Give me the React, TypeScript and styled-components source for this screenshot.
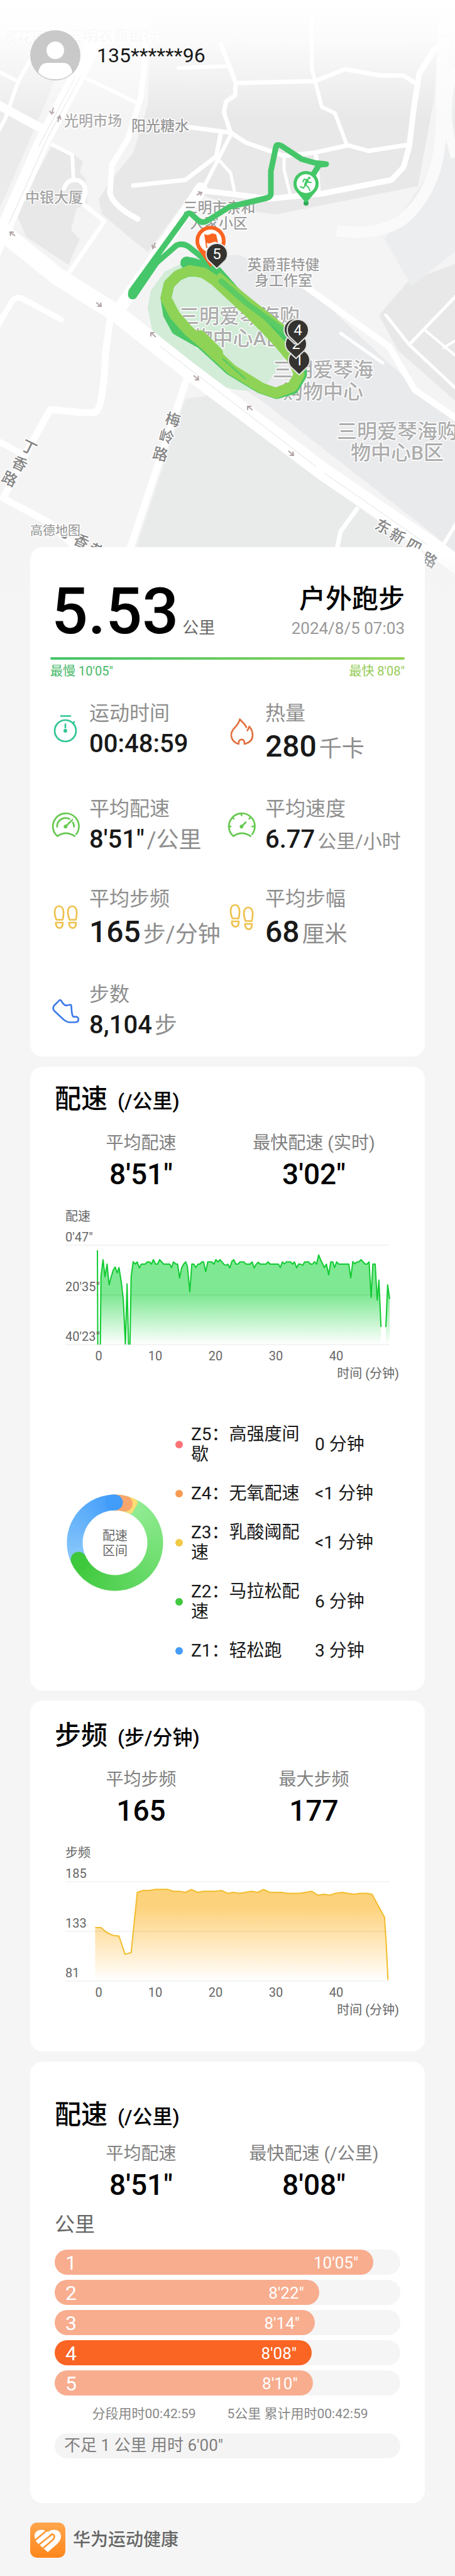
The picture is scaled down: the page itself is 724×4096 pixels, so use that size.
import React, { useId } from 'react';
import styled, { createGlobalStyle } from 'styled-components';

const GlobalStyle = createGlobalStyle`
  * { box-sizing: border-box; }
  body {
    margin: 0;
    background: #f5f5f5;
    color: #191919;
    font-family: Roboto, "Noto Sans CJK SC", sans-serif;
  }
  h1, h2, p, dl, dt, dd, ul, ol { margin: 0; padding: 0; }
  ul, ol { list-style: none; }
`;

const Page = styled.main`
  min-width: 600px;
`;

/* ---------- Map hero ---------- */

const Hero = styled.header`
  position: relative;
`;

const MapSvg = styled.svg`
  display: block;
  width: 100%;
  height: auto;
`;

const User = styled.div`
  position: absolute;
  top: 48px;
  left: 48px;
  display: flex;
  align-items: center;
  gap: 26px;
`;

const UserName = styled.span`
  font-size: 32px;
  line-height: 40px;
`;

const MapText = styled.text<{ $fill?: string; $weight?: number }>`
  fill: ${(p) => p.$fill ?? '#a2a2a2'};
  font-weight: ${(p) => p.$weight ?? 500};
  stroke: #ffffff;
  stroke-width: 3px;
  stroke-linejoin: round;
  paint-order: stroke;
  text-anchor: middle;
  dominant-baseline: central;
`;

const PinText = styled.text`
  fill: #ffffff;
  font-size: 24px;
  text-anchor: middle;
  dominant-baseline: central;
`;

const places = [
  { text: '景花园', x: 40, y: 60, size: 24, fill: '#d2d2d2' },
  { text: '三明农商银行', x: 180, y: 57, size: 24, fill: '#d2d2d2' },
  { text: '光明市场', x: 148, y: 192, size: 23, fill: '#a9a9a9' },
  { text: '阳光糖水', x: 255, y: 200, size: 23, fill: '#989898' },
  { text: '中银大厦', x: 86, y: 314, size: 23, fill: '#a2a2a2' },
  { text: '三明市亲和', x: 349, y: 330, size: 23, fill: '#9c9c9c' },
  { text: '人家小区', x: 348, y: 355, size: 23, fill: '#9c9c9c' },
  { text: '英爵菲特健', x: 451, y: 421, size: 23, fill: '#9c9c9c' },
  { text: '身工作室', x: 451, y: 446, size: 23, fill: '#9c9c9c' },
  { text: '三明爱琴海购', x: 381, y: 503, size: 32, fill: '#adadad' },
  { text: '物中心A区', x: 381, y: 538, size: 32, fill: '#adadad' },
  { text: '三明爱琴海', x: 514, y: 588, size: 32, fill: '#adadad' },
  { text: '购物中心', x: 514, y: 623, size: 32, fill: '#adadad' },
  { text: '三明爱琴海购', x: 632, y: 686, size: 32, fill: '#adadad' },
  { text: '物中心B区', x: 632, y: 720, size: 32, fill: '#adadad' },
];

const roadGlyphs = [
  { text: '梅', x: 275, y: 668, turn: 15 },
  { text: '岭', x: 265, y: 695, turn: 15 },
  { text: '路', x: 255, y: 723, turn: 14 },
  { text: '丁', x: 46, y: 712, turn: 26 },
  { text: '香', x: 31, y: 738, turn: 26 },
  { text: '路', x: 15, y: 762, turn: 26 },
  { text: '丁', x: 107, y: 848, turn: 26 },
  { text: '香', x: 129, y: 861, turn: 26 },
  { text: '巷', x: 153, y: 876, turn: 26 },
  { text: '东', x: 609, y: 838, turn: 28 },
  { text: '新', x: 632, y: 853, turn: 28 },
  { text: '四', x: 658, y: 869, turn: 28 },
  { text: '路', x: 683, y: 891, turn: 28 },
];

const roads: { w: number; d: string }[] = [
  { w: 24, d: 'M150 60 L139 92 L69 222 L9 358 L-10 400' },
  { w: 28, d: 'M-10 358 L92 440 L185 498 L295 585 L517 752 L693 872 L740 908' },
  { w: 20, d: 'M320 300 L297 335 L240 420 L185 498' },
  { w: 11, d: 'M303 585 L208 869 L195 915' },
  { w: 11, d: 'M177 495 L168 560 Q164 656 150 656 L130 656 L80 651 L46 712 L5 792 L78 831 L120 870' },
  { w: 9, d: 'M-5 520 L20 478 Q28 470 38 476 L97 508' },
  { w: 10, d: 'M-6 700 L36 722' },
  { w: 14, d: 'M-4 166 L69 206' },
  { w: 6, d: 'M48 95 L28 132 L9 187 L-2 208' },
  { w: 6, d: 'M-2 114 L30 130' },
  { w: 6, d: 'M134 123 L217 163' },
  { w: 9, d: 'M232 60 L228 120 L224 155 L203 222 L178 262 L175 307 Q180 328 219 348' },
  { w: 6, d: 'M83 230 L115 246 L117 286' },
  { w: 7, d: 'M102 300 Q106 287 118 286 Q134 286 136 304 L132 324 L166 352 L111 432' },
  { w: 6, d: 'M284 108 L365 105' },
  { w: 7, d: 'M351 70 L365 105 L375 132 L374 152 L360 161 L356 178 L367 211 L392 227 L452 248 L499 243 L554 231 L586 240 L651 230' },
  { w: 7, d: 'M375 132 L501 129 L549 110 L605 120 L642 120 L665 135' },
  { w: 6, d: 'M496 26 L496 108 L503 135 L512 170 L533 180 L552 231' },
  { w: 9, d: 'M693 76 L667 117 L658 176 L651 234 L642 266 L623 286 L512 308 L429 316 L323 303' },
  { w: 7, d: 'M300 202 L367 211' },
  { w: 7, d: 'M351 214 L344 249 L295 286 L212 295' },
  { w: 6, d: 'M369 211 L323 300' },
  { w: 5, d: 'M349 255 L367 275 L374 309' },
  { w: 5, d: 'M452 246 L452 270 L462 310' },
  { w: 7, d: 'M503 249 L507 306' },
  { w: 10, d: 'M478 450 L619 551 L660 620 L730 668' },
  { w: 5, d: 'M542 530 L609 577' },
  { w: 5, d: 'M614 501 L651 548 L730 622' },
  { w: 5, d: 'M651 548 L730 466' },
  { w: 4, d: 'M674 523 L730 570' },
  { w: 4, d: 'M706 553 L730 538' },
  { w: 7, d: 'M568 809 L542 845 L530 900' },
  { w: 6, d: 'M697 880 L730 826' },
];

type PinProps = { x: number; y: number; r: number; tail: number; fill: string; stroke?: string };

const Pin = ({ x, y, r, tail, fill, stroke }: PinProps) => (
  <path
    d={`M${x} ${y + tail} L${x - r * 0.82} ${y + r * 0.57} A${r} ${r} 0 1 1 ${x + r * 0.82} ${y + r * 0.57} Z`}
    fill={fill}
    stroke={stroke}
    strokeWidth={stroke ? 2 : 0}
    strokeLinejoin="round"
  />
);

const kmPins = [
  { n: '1', x: 476, y: 573 },
  { n: '2', x: 471, y: 547 },
  { n: '', x: 469, y: 524 },
  { n: '4', x: 474, y: 525 },
  { n: '5', x: 345, y: 404 },
];

const RouteMap = () => (
  <MapSvg viewBox="0 0 724 950" role="img" aria-label="跑步路线地图">
    <defs>
      <linearGradient id="fadeTop" x1="0" y1="0" x2="0" y2="1">
        <stop offset="0" stopColor="#ffffff" />
        <stop offset="0.32" stopColor="#ffffff" stopOpacity="0.85" />
        <stop offset="1" stopColor="#ffffff" stopOpacity="0" />
      </linearGradient>
      <linearGradient id="fadeBottom" x1="0" y1="0" x2="0" y2="1">
        <stop offset="0" stopColor="#f5f5f5" stopOpacity="0" />
        <stop offset="1" stopColor="#f5f5f5" />
      </linearGradient>
    </defs>
    <rect width="724" height="950" fill="#f5f4f4" />
    <g fill="#e8e8e8">
      <path d="M0 60 L110 60 L78 150 L40 240 L0 330 Z" fill="#ebebeb" />
      <path d="M240 29 L697 29 L692 150 L665 296 L439 341 L402 336 L319 310 L295 320 L235 401 L203 375 L162 340 L157 316 L178 285 L212 243 L235 167 Z" />
      <path d="M83 231 L115 243 L132 257 L127 275 L136 284 L139 325 L122 331 L113 366 L127 380 L109 421 L42 377 L28 345 L35 319 Z" />
      <path d="M651 446 L603 501 L633 557 L724 637 L724 420 Z" />
      <path d="M724 120 L700 250 L612 380 L655 455 L724 400 Z" fill="#ebedee" />
      <path d="M380 405 L480 447 L614 573 L724 672 L724 880 L690 850 L420 640 L300 560 L240 480 L300 410 Z" fill="#e9eaec" />
      <path d="M295 634 L332 629 L605 831 L640 870 L640 950 L190 950 Z" fill="#e9ebeb" />
      <path d="M297 415 L262 432 L240 462 L235 490 L242 525 L295 573 L350 612 Q380 626 420 618 L452 570 L443 518 L360 452 Z" fill="#d2ecd7" />
    </g>
    <path d="M706 60 L702 200 Q700 300 640 350 Q600 376 536 367" fill="none" stroke="#fafafa" strokeWidth="18" />
    <path d="M724 110 Q700 170 724 250" fill="none" stroke="#fafafa" strokeWidth="14" />
    <g fill="none" stroke="#ffffff" strokeLinejoin="round" strokeLinecap="round">
      {roads.map((road) => (
        <path key={road.d} d={road.d} strokeWidth={road.w} />
      ))}
    </g>
    <g fill="none" stroke="#dfe3e2" strokeWidth="1">
      <path d="M128 122 L76 218 L14 356" />
      <path d="M120 122 L62 232" />
      <path d="M254 550 L503 742" />
      <path d="M516 752 L680 866" />
    </g>
    <g fill="none" stroke="#b3a5a5" strokeWidth="2">
      <path d="M85 171 L82 181 M79 176 L82 181 L86 178" />
      <path d="M92 194 L95 184 M91 188 L95 184 L97 190" />
      <path d="M16 369 L24 375 M17 375 L16 369 L22 369" />
      <path d="M247 386 L243 395 M242 389 L243 395 L248 392" />
      <path d="M313 310 L321 306 M315 305 L321 306 L319 311" />
      <path d="M153 481 L161 487 M160 481 L161 487 L155 487" />
      <path d="M248 536 L240 529 M240 535 L240 529 L246 529" />
      <path d="M308 597 L316 604 M315 598 L316 604 L310 604" />
      <path d="M402 652 L394 646 M394 652 L394 646 L400 646" />
      <path d="M459 717 L467 724 M466 718 L467 724 L461 724" />
    </g>
    {places.map((place) => (
      <MapText key={`${place.text}${place.y}`} x={place.x} y={place.y} fontSize={place.size} $fill={place.fill}>
        {place.text}
      </MapText>
    ))}
    {roadGlyphs.map((glyph) => (
      <MapText
        key={`${glyph.x}-${glyph.y}`}
        fontSize="24"
        $fill="#858585"
        transform={`translate(${glyph.x} ${glyph.y}) rotate(${glyph.turn})`}
      >
        {glyph.text}
      </MapText>
    ))}
    <MapText x="88" y="844" fontSize="20" $fill="#929292" $weight={400}>高德地图</MapText>

    <g fill="none" stroke="#46c66a" strokeWidth="9" strokeLinejoin="round">
      <path d="M496 281 L508 262 L519 261 L501 259 L480 253 L448 232 Q440 228 439 234 L431 272 L431 308 Q431 313 424 315 L365 329 L330 351 Q322 356 315 350 L304 340 Q299 337 296 343 L209 463 Q206 473 213 471 L219 462 L249 418 L281 390 Q290 386 300 392 L320 408 L345 432" />
      <path d="M297 418 Q320 421 342 436" strokeWidth="20" strokeLinecap="round" />
    </g>
    <g fill="none" strokeLinejoin="round" strokeLinecap="round">
      <path
        d="M345 432 L368 458 L395 490 L428 512 L462 540 L478 566 L480 596 L467 618 L440 626 L414 617 L366 588 L320 546 L281 524 L268 500 L264 474 L269 452 L283 438 L300 431 Z"
        stroke="#4bc766"
        strokeWidth="17"
      />
      <path
        d="M342 446 L368 470 L396 496 L424 524 L448 550 L468 574 L476 596 L465 615 L439 625 L416 617 L369 588 L332 553 L300 526 L278 501 L264 474 L269 452 L283 438 L302 430 L324 434 Z"
        stroke="#8fd356"
        strokeWidth="17"
      />
      <path d="M350 438 L385 468 L420 496 L450 520" stroke="#8fd356" strokeWidth="8" />
      <path d="M352 447 L392 482 L430 510 L462 534" stroke="#5ccb63" strokeWidth="9" />
      <path d="M318 536 L344 562" stroke="#8fd356" strokeWidth="22" />
      <path d="M355 571 L390 602" stroke="#5ccb63" strokeWidth="3" />
    </g>

    <circle cx="487" cy="323" r="4" fill="#2fa955" />
    <Pin x={487} y={292} r={20} tail={31} fill="#43c765" />
    <circle cx="487" cy="292" r="15" fill="#ffffff" />
    <circle cx="492" cy="283" r="2" fill="#43c765" />
    <g fill="none" stroke="#43c765" strokeLinecap="round" strokeLinejoin="round">
      <path d="M482 289 L484 285 L489 286 L491 290 L495 290" strokeWidth="2" />
      <path d="M489 286 L486 293" strokeWidth="4" />
      <path d="M486 294 L491 298 L493 303 M486 294 L483 299 L478 297" strokeWidth="2" />
    </g>

    <Pin x={335} y={383} r={24} tail={42} fill="#fb6420" />
    <circle cx="335" cy="383" r="18" fill="#ffffff" />
    <path d="M325 372 Q330 375 335 372 Q340 370 344 373 L347 386 Q342 383 337 386 Q332 388 329 386 L330 394 L328 394 Z" fill="#fb6420" />

    {kmPins.map((pin) => (
      <g key={`${pin.x}-${pin.y}`}>
        <Pin x={pin.x} y={pin.y} r={17} tail={23} fill="#34332f" stroke="#e3e3e3" />
        <PinText x={pin.x} y={pin.y}>{pin.n}</PinText>
      </g>
    ))}

    <rect width="724" height="190" fill="url(#fadeTop)" />
    <rect y="880" width="724" height="70" fill="url(#fadeBottom)" />
  </MapSvg>
);

const Avatar = () => (
  <svg width="80" height="80" viewBox="0 0 80 80" aria-hidden="true">
    <circle cx="40" cy="40" r="40" fill="#c9c9c9" />
    <circle cx="40" cy="32" r="14" fill="#ffffff" />
    <path d="M13 67 C15 56 20 52 28 52 H52 C60 52 65 56 67 67 C60 75 51 78 40 78 C29 78 20 75 13 67 Z" fill="#ffffff" />
  </svg>
);

/* ---------- Cards ---------- */

const Cards = styled.div`
  position: relative;
  margin: -80px 48px 0;
  display: flex;
  flex-direction: column;
  gap: 16px;
`;

const Card = styled.section<{ $pad: string }>`
  padding: ${(p) => p.$pad};
  border-radius: 20px;
  background: #ffffff;
`;

const Summary = styled.div`
  display: flex;
  justify-content: space-between;
  align-items: center;
`;

const Distance = styled.p`
  display: flex;
  align-items: baseline;
  gap: 6px;
  padding-left: 2px;
  color: #666666;
  font-size: 26px;
  line-height: 30px;
`;

const DistanceNumber = styled.span`
  color: #000000;
  font-size: 102px;
  font-weight: 500;
  line-height: 120px;
`;

const Activity = styled.div`
  text-align: right;
`;

const ActivityName = styled.h1`
  color: #000000;
  font-size: 42px;
  font-weight: 500;
  line-height: 50px;
`;

const ActivityDate = styled.p`
  margin-top: 3px;
  color: #999999;
  font-size: 26px;
  line-height: 36px;
`;

const PaceLine = styled.div`
  height: 4px;
  margin-top: 13px;
  border-radius: 2px;
  background: linear-gradient(90deg, #45c46c, #92d259);
`;

const PaceRange = styled.div`
  display: flex;
  justify-content: space-between;
  margin-top: 4px;
  color: #45b866;
  font-size: 20px;
  line-height: 28px;

  span:last-child { color: #96cc58; }
`;

const Metrics = styled.dl`
  display: grid;
  grid-template-columns: 70fr 71fr;
  align-items: start;
  row-gap: 50px;
  margin-top: 32px;
`;

const Metric = styled.div`
  display: grid;
  grid-template-columns: 48px 1fr;
  column-gap: 14px;
  align-items: center;
`;

const MetricLabel = styled.dt`
  color: #8e8e8e;
  font-size: 32px;
  line-height: 42px;
`;

const MetricValue = styled.dd<{ $large?: boolean; $smallUnit?: boolean }>`
  display: flex;
  align-items: baseline;
  gap: 4px;
  margin-top: 4px;
  white-space: nowrap;
  height: ${(p) => (p.$large ? 56 : 47)}px;
  line-height: ${(p) => (p.$large ? 56 : 47)}px;

  b {
    font-size: ${(p) => (p.$large ? 48 : 40)}px;
    font-weight: 500;
  }
  span {
    color: #8e8e8e;
    font-size: ${(p) => (p.$smallUnit ? 30 : 36)}px;
  }
`;

const IconBox = styled.svg`
  display: block;
  width: 48px;
  height: 48px;
  fill: none;
  stroke: currentColor;
  stroke-width: 2.7px;
  stroke-linecap: round;
  stroke-linejoin: round;
`;

const TimerIcon = () => (
  <IconBox viewBox="0 0 48 48" color="#30c596">
    <circle cx="24" cy="26" r="17" />
    <path d="M17 2.5 H32 M24 15.5 V21 M36.5 13.5 L38 12" />
    <circle cx="24" cy="26" r="1.6" fill="currentColor" />
  </IconBox>
);

const FlameIcon = () => (
  <IconBox viewBox="0 0 48 48" color="#e1713f">
    <path d="M32 16.5 C30.5 11.5 25 8 21.6 3.6 C20 9.5 18 12.5 14 16.5 C9.5 21 7.5 25 8 30 C9 38 14 41.5 19.7 43 C19.4 38 21.5 35.8 24.4 35.8 C27.5 35.8 29.4 38 29 43 C37 41 42 36 42 29 C42 23 39.5 18.5 36.6 15.2 C36 18 35 19.5 33.5 21.5" />
  </IconBox>
);

const PaceIcon = () => (
  <IconBox viewBox="0 0 48 48" color="#66c94f">
    <path d="M39 41.6 Q24.3 32 11.3 41.6 A20.7 20.7 0 1 1 41.4 38.4" />
    <path d="M10.9 26.6 A13.4 13.4 0 0 1 30.5 14.2 M36 19.8 A13.4 13.4 0 0 1 37.8 26.6" />
    <path d="M24.3 26.2 L35 15.8" />
    <circle cx="24.3" cy="26.2" r="1.6" fill="currentColor" />
  </IconBox>
);

const SpeedIcon = () => (
  <IconBox viewBox="0 0 48 48" color="#66c94f">
    <path d="M39 41.6 Q24.3 32 11.3 41.6 A20.7 20.7 0 1 1 41.4 38.4" />
    <path d="M24.3 6 V8.5 M4 26.2 H7 M41.5 26.2 H44.5 M10.5 12.4 L12 13.9 M38 12.4 L36.5 13.9" />
    <path d="M24.3 26.2 L31 19.5" />
    <circle cx="24.3" cy="26.2" r="1.6" fill="currentColor" />
  </IconBox>
);

const footShape = 'M9.8 27.5 C5 16 6.5 6 14 6 C21.5 6 22.5 16 19.6 27.5 Z M8.8 32 H20 C20 38 18.5 40.6 15 40.6 C11 40.6 8.8 38 8.8 32 Z';

const StepsIcon = ({ stagger = 0 }: { stagger?: number }) => (
  <IconBox viewBox="0 0 48 48" color="#eec14c">
    <path d={footShape} transform={`translate(0 ${-stagger})`} />
    <path d={footShape} transform={`translate(21 ${stagger})`} />
  </IconBox>
);

const ShoeIcon = () => (
  <IconBox viewBox="0 0 48 48" color="#3f7be8">
    <path d="M14.5 7.6 C18.5 4.8 18.2 15.5 25.9 15.8 L30.5 14.8 C33.5 14.2 33.6 16 33.6 18 C34 27 35 34 37.5 33.8 C43 33 44.8 35 44.8 38 C44.8 41 42.5 42.5 39 42.5 H31 C27 42.5 24 40.5 21 38 L6.5 24.5 C4 22 4 19.5 6 16 Z" />
  </IconBox>
);

const metrics = [
  { label: '运动时间', value: '00:48:59', unit: '', icon: <TimerIcon /> },
  { label: '热量', value: '280', unit: '千卡', large: true, icon: <FlameIcon /> },
  { label: '平均配速', value: '8\'51"', unit: '/公里', icon: <PaceIcon /> },
  { label: '平均速度', value: '6.77', unit: '公里/小时', smallUnit: true, icon: <SpeedIcon /> },
  { label: '平均步频', value: '165', unit: '步/分钟', large: true, icon: <StepsIcon /> },
  { label: '平均步幅', value: '68', unit: '厘米', large: true, icon: <StepsIcon stagger={2} /> },
  { label: '步数', value: '8,104', unit: '步', icon: <ShoeIcon /> },
];

/* ---------- Section heading and stats ---------- */

const Title = styled.h2`
  display: flex;
  align-items: baseline;
  gap: 16px;
  color: #000000;
  font-size: 42px;
  font-weight: 500;
  line-height: 56px;

  small {
    font-size: 32px;
    line-height: 40px;
  }
`;

const Stats = styled.dl<{ $tight?: boolean }>`
  display: grid;
  grid-template-columns: 1fr 1fr;
  margin-top: ${(p) => (p.$tight ? 16 : 24)}px;
  text-align: center;

  dt {
    color: #808080;
    font-size: 28px;
    line-height: 36px;
  }
  dd {
    margin-top: 4px;
    color: #000000;
    font-size: 46px;
    font-weight: 500;
    line-height: 54px;
  }
`;

type StatsRowProps = { tight?: boolean; items: [string, string][] };

const StatsRow = ({ tight, items }: StatsRowProps) => (
  <Stats $tight={tight}>
    {items.map(([label, value]) => (
      <div key={label}>
        <dt>{label}</dt>
        <dd>{value}</dd>
      </div>
    ))}
  </Stats>
);

/* ---------- Area charts ---------- */

const ChartSvg = styled.svg`
  display: block;
  width: 100%;
  height: auto;
  margin-top: 26px;

  text {
    fill: #666666;
    font-size: 20px;
    dominant-baseline: central;
  }
`;

type ChartProps = {
  name: string;
  yLabels: string[];
  xLabels: { text: string; x: number }[];
  runs: string[];
  line: string;
  fill: string;
  solidUntil: number;
};

const AreaChart = ({ name, yLabels, xLabels, runs, line, fill, solidUntil }: ChartProps) => {
  const gradient = useId();
  return (
    <ChartSvg viewBox="0 0 550 278" role="img" aria-label={`${name}图表`}>
      <defs>
        <linearGradient id={gradient} gradientUnits="userSpaceOnUse" x1="0" y1="60" x2="0" y2="218">
          <stop offset={solidUntil} stopColor={fill} />
          <stop offset="1" stopColor={fill} stopOpacity="0" />
        </linearGradient>
      </defs>
      {runs.map((points) => {
        const pairs = points.split(' ');
        const start = pairs[0].split(',')[0];
        const end = pairs[pairs.length - 1].split(',')[0];
        return (
          <g key={points}>
            <polygon points={`${start},218 ${points} ${end},218`} fill={`url(#${gradient})`} />
            <polyline points={points} fill="none" stroke={line} strokeWidth="2" strokeLinejoin="round" />
          </g>
        );
      })}
      {[60, 139, 218].map((y) => (
        <path key={y} d={`M17 ${y} H533`} stroke="#000000" strokeOpacity="0.09" strokeWidth="1" />
      ))}
      <text x="17" y="14">{name}</text>
      {yLabels.map((label, i) => (
        <text key={label} x="17" y={47 + i * 79}>{label}</text>
      ))}
      {xLabels.map((label) => (
        <text key={label.text} x={label.x} y="236" textAnchor="middle">{label.text}</text>
      ))}
      <text x="548" y="264" textAnchor="end">时间 (分钟)</text>
    </ChartSvg>
  );
};

const minutes = [
  { text: '0', x: 70 },
  { text: '10', x: 160 },
  { text: '20', x: 256 },
  { text: '30', x: 352 },
  { text: '40', x: 448 },
];

const paceRuns = [
  '68,68 68.6,218',
  '72.7,218 73.7,109 77,83 80,110 83.4,90 86.6,123 90,110 93,100 96.3,94.5 99.5,104 102.3,95.5 106,118.6 109.2,146 112.5,217 115.2,121.6 117.5,218',
  '119.8,218 121.7,110 125,86 128,90 131.4,86.5 134.6,96 138,90 144,90 147.5,86.5 151,86.5 154,90 157,83 160.5,90 163.7,90 167,83 173.4,90 183,90 186,95.5 189,86.5 193,90 195.6,90 198.8,112 202,96 205.3,90 208.5,86.5 211.3,94 215,134 218.2,90 221.4,90 224.6,95.5 228,90 231,90 234.3,86.5 237,86.5 240.3,102 243.6,86.5 250,86.5 253.3,90 256.5,83 259.7,86.5 263,83 269,90 272.2,92 275.4,90 278.7,96 282,85.6 285,83 288.4,90 291.6,90 294.8,86.5 301,86.5 304.5,90 311,90 314.2,86.5 317.5,96 320.7,90 324,87 327,90 336.4,90 339.6,86.5 342.8,90 356,90 359,95.5 362.2,86.5 365.5,89.6 368.7,86.5 375.2,86.5 378.4,90 381.6,86.5 385,96 388,90 391.3,90 394.6,92 397.8,86.5 404,86.5 407,90 410.3,90 413.5,86 416.7,90 420,75.5 423.2,83 429.2,95.5 432.4,90 436,107 439.3,86.5 442.6,86.5 445.3,95.5 448.6,86.5 452,90 468,90 471.2,112 474.4,86 477.7,89.6 481,86.5 484,86.5 487.4,83 494,90 497,90 500.3,86.5 503.5,143 506.3,90 510,90 513.2,147 516,115.5 519.2,190',
  '527,190 529.8,123 533,145.5',
];

const cadenceRuns = [
  '64.4,133 73.7,133 83,141 93,145.4 102.3,146.6 112,175.4 121.7,172.7 131.4,77 140.6,74 150.3,74 160,72.3 179.4,72.3 188.6,75.3 198.3,75.3 208,77 217.7,72.3 227.4,77 236.7,75.3 256,75.3 265.3,74 275,78.4 284.7,77 294.4,78.4 313.3,75.3 323,77 332.2,72.3 342.4,77 361,77 370,78.4 390.4,78.4 409.3,75.3 419,81.5 428.7,80 438,81.5 447.2,78.4 457,77 476.3,80 486,78.4 497,78.4 505,80 524.8,116.5 527.5,157 530.3,216',
];

/* ---------- Pace zones ---------- */

const Zones = styled.div`
  display: grid;
  grid-template-columns: 154px 1fr;
  column-gap: 19px;
  align-items: center;
  margin-top: 67px;
  padding-left: 19px;
`;

const DonutSvg = styled.svg`
  display: block;
  width: 100%;

  text {
    fill: #666666;
    font-size: 20px;
    text-anchor: middle;
    dominant-baseline: central;
  }
`;

const ZoneList = styled.ul`
  display: grid;
  row-gap: 30px;
`;

const Zone = styled.li`
  display: grid;
  grid-template-columns: 12px 184px 1fr;
  column-gap: 13px;
  align-items: center;
  font-size: 28px;
  line-height: 32px;
`;

const Dot = styled.i<{ $color: string }>`
  width: 12px;
  height: 12px;
  border-radius: 50%;
  background: ${(p) => p.$color};
`;

const zones = [
  { name: 'Z5：高强度间歇', time: '0 分钟', color: '#fb7275' },
  { name: 'Z4：无氧配速', time: '<1 分钟', color: '#f79a52' },
  { name: 'Z3：乳酸阈配速', time: '<1 分钟', color: '#f1c944' },
  { name: 'Z2：马拉松配速', time: '6 分钟', color: '#41c83f' },
  { name: 'Z1：轻松跑', time: '3 分钟', color: '#439cfa' },
];

const RING = 64;

const onRing = (deg: number) => {
  const a = (deg * Math.PI) / 180;
  return `${(77 + RING * Math.sin(a)).toFixed(2)} ${(77 - RING * Math.cos(a)).toFixed(2)}`;
};

const arc = (from: number, to: number) =>
  `M${onRing(from)} A${RING} ${RING} 0 ${to - from > 180 ? 1 : 0} 1 ${onRing(to)}`;

type SweepProps = { from: number; to: number; start: number[]; end: number[] };

/* An arc whose colour runs from start to end, drawn as short overlapping pieces. */
const Sweep = ({ from, to, start, end }: SweepProps) => {
  const steps = 48;
  const size = (to - from) / steps;
  return (
    <>
      {Array.from({ length: steps }, (_, i) => {
        const t = i / (steps - 1);
        const rgb = start.map((c, k) => Math.round(c + (end[k] - c) * t)).join(',');
        const a = from + i * size;
        return (
          <path
            key={i}
            d={arc(a, Math.min(a + size + 1, to))}
            stroke={`rgb(${rgb})`}
            strokeLinecap={i === steps - 1 ? 'round' : 'butt'}
          />
        );
      })}
    </>
  );
};

const ZoneDonut = () => (
  <DonutSvg viewBox="0 0 154 154" role="img" aria-label="配速区间">
    <g fill="none" strokeWidth="25">
      <path d={arc(4, 31)} stroke="#90ec92" />
      <path d={arc(0, 23)} stroke="#fcdc74" strokeLinecap="round" />
      <path d={arc(0, 14)} stroke="#f9a56e" strokeLinecap="round" />
      <Sweep from={243} to={360} start={[140, 202, 250]} end={[66, 156, 250]} />
      <Sweep from={30} to={245} start={[144, 236, 146]} end={[62, 200, 60]} />
    </g>
    <text x="77" y="66">配速</text>
    <text x="77" y="90">区间</text>
  </DonutSvg>
);

/* ---------- Kilometre splits ---------- */

const SplitHeading = styled.p`
  margin-top: 16px;
  color: #666666;
  font-size: 32px;
  line-height: 40px;
`;

const Splits = styled.ol`
  display: grid;
  gap: 8px;
  margin-top: 20px;
`;

const Track = styled.li`
  border-radius: 20px;
  background: #f5f5f5;
`;

const Bar = styled.div<{ $best: boolean }>`
  display: flex;
  justify-content: space-between;
  align-items: center;
  height: 40px;
  padding: 2px 24px 0 17px;
  border-radius: 20px;
  background: ${(p) => (p.$best ? '#fa6524' : '#f8ad8e')};
  color: #ffffff;
  font-size: 32px;

  span:last-child { font-size: 26px; }
`;

const SplitTimes = styled.div`
  display: flex;
  justify-content: center;
  gap: 50px;
  margin-top: 14px;
  padding-left: 8px;
  color: #888888;
  font-size: 21px;
  line-height: 30px;
`;

const Remainder = styled.p`
  height: 40px;
  margin-top: 16px;
  padding-left: 15px;
  border-radius: 20px;
  background: #f5f4f4;
  color: #808080;
  font-size: 26px;
  line-height: 38px;
`;

const splits = [
  { km: 1, pace: '10\'05"', seconds: 605 },
  { km: 2, pace: '8\'22"', seconds: 502 },
  { km: 3, pace: '8\'14"', seconds: 494 },
  { km: 4, pace: '8\'08"', seconds: 488 },
  { km: 5, pace: '8\'10"', seconds: 490 },
];

const fastest = Math.min(...splits.map((s) => s.seconds));
const fullTrackSeconds = 656;

/* ---------- Footer ---------- */

const Footer = styled.footer`
  display: flex;
  align-items: center;
  gap: 12px;
  padding: 31px 48px 29px;
  color: #666666;
  font-size: 28px;
  font-weight: 500;
  line-height: 40px;
`;

const AppLogo = () => (
  <svg width="56" height="56" viewBox="0 0 56 56" aria-hidden="true">
    <defs>
      <linearGradient id="logoFill" x1="0" y1="0" x2="0" y2="1">
        <stop offset="0" stopColor="#ffa64d" />
        <stop offset="1" stopColor="#ff861c" />
      </linearGradient>
    </defs>
    <rect width="56" height="56" rx="11" fill="url(#logoFill)" />
    <path d="M7 21 C7 12 19 8 28 15 C38 8 49 12 49 22 C49 27 46 31 42 35 L28 47 L12 33 C9 30 7 26 7 21 Z" fill="#ffffff" />
    <g fill="none" stroke="#ff9632" strokeWidth="2.6" strokeLinecap="round">
      <path d="M8 28 L26 13" />
      <path d="M13 36 L35 18.5" />
      <path d="M19 42 L35 28.5 Q40 24 38 20 Q36 17.5 32 20.5" />
    </g>
  </svg>
);

export default function App() {
  return (
    <Page>
      <GlobalStyle />
      <Hero>
        <RouteMap />
        <User>
          <Avatar />
          <UserName>135******96</UserName>
        </User>
      </Hero>

      <Cards>
        <Card $pad="42px 32px 27px">
          <Summary>
            <Distance>
              <DistanceNumber>5.53</DistanceNumber>
              <span>公里</span>
            </Distance>
            <Activity>
              <ActivityName>户外跑步</ActivityName>
              <ActivityDate>2024/8/5 07:03</ActivityDate>
            </Activity>
          </Summary>
          <PaceLine />
          <PaceRange>
            <span>最慢 10'05"</span>
            <span>最快 8'08"</span>
          </PaceRange>
          <Metrics>
            {metrics.map((m) => (
              <Metric key={m.label}>
                {m.icon}
                <div>
                  <MetricLabel>{m.label}</MetricLabel>
                  <MetricValue $large={m.large} $smallUnit={m.smallUnit}>
                    <b>{m.value}</b>
                    {m.unit && <span>{m.unit}</span>}
                  </MetricValue>
                </div>
              </Metric>
            ))}
          </Metrics>
        </Card>

        <Card $pad="24px 39px 47px">
          <Title>配速<small>(/公里)</small></Title>
          <StatsRow items={[['平均配速', '8\'51"'], ['最快配速 (实时)', '3\'02"']]} />
          <AreaChart
            name="配速"
            yLabels={['0\'47"', '20\'35"', '40\'23"']}
            xLabels={minutes}
            runs={paceRuns}
            line="#12cb33"
            fill="#7fe893"
            solidUntil={0.5}
          />
          <Zones>
            <ZoneDonut />
            <ZoneList>
              {zones.map((zone) => (
                <Zone key={zone.name}>
                  <Dot $color={zone.color} />
                  <span>{zone.name}</span>
                  <span>{zone.time}</span>
                </Zone>
              ))}
            </ZoneList>
          </Zones>
        </Card>

        <Card $pad="28px 39px 52px">
          <Title>步频<small>(步/分钟)</small></Title>
          <StatsRow items={[['平均步频', '165'], ['最大步频', '177']]} />
          <AreaChart
            name="步频"
            yLabels={['185', '133', '81']}
            xLabels={minutes}
            runs={cadenceRuns}
            line="#f2bd2e"
            fill="#fdd27c"
            solidUntil={0.25}
          />
        </Card>

        <Card $pad="57px 39px 71px">
          <Title>配速<small>(/公里)</small></Title>
          <StatsRow tight items={[['平均配速', '8\'51"'], ['最快配速 (/公里)', '8\'08"']]} />
          <SplitHeading>公里</SplitHeading>
          <Splits>
            {splits.map((s) => (
              <Track key={s.km}>
                <Bar $best={s.seconds === fastest} style={{ width: `${(s.seconds / fullTrackSeconds) * 100}%` }}>
                  <span>{s.km}</span>
                  <span>{s.pace}</span>
                </Bar>
              </Track>
            ))}
          </Splits>
          <SplitTimes>
            <span>分段用时00:42:59</span>
            <span>5公里 累计用时00:42:59</span>
          </SplitTimes>
          <Remainder>不足 1 公里 用时 6'00"</Remainder>
        </Card>
      </Cards>

      <Footer>
        <AppLogo />
        <span>华为运动健康</span>
      </Footer>
    </Page>
  );
}
